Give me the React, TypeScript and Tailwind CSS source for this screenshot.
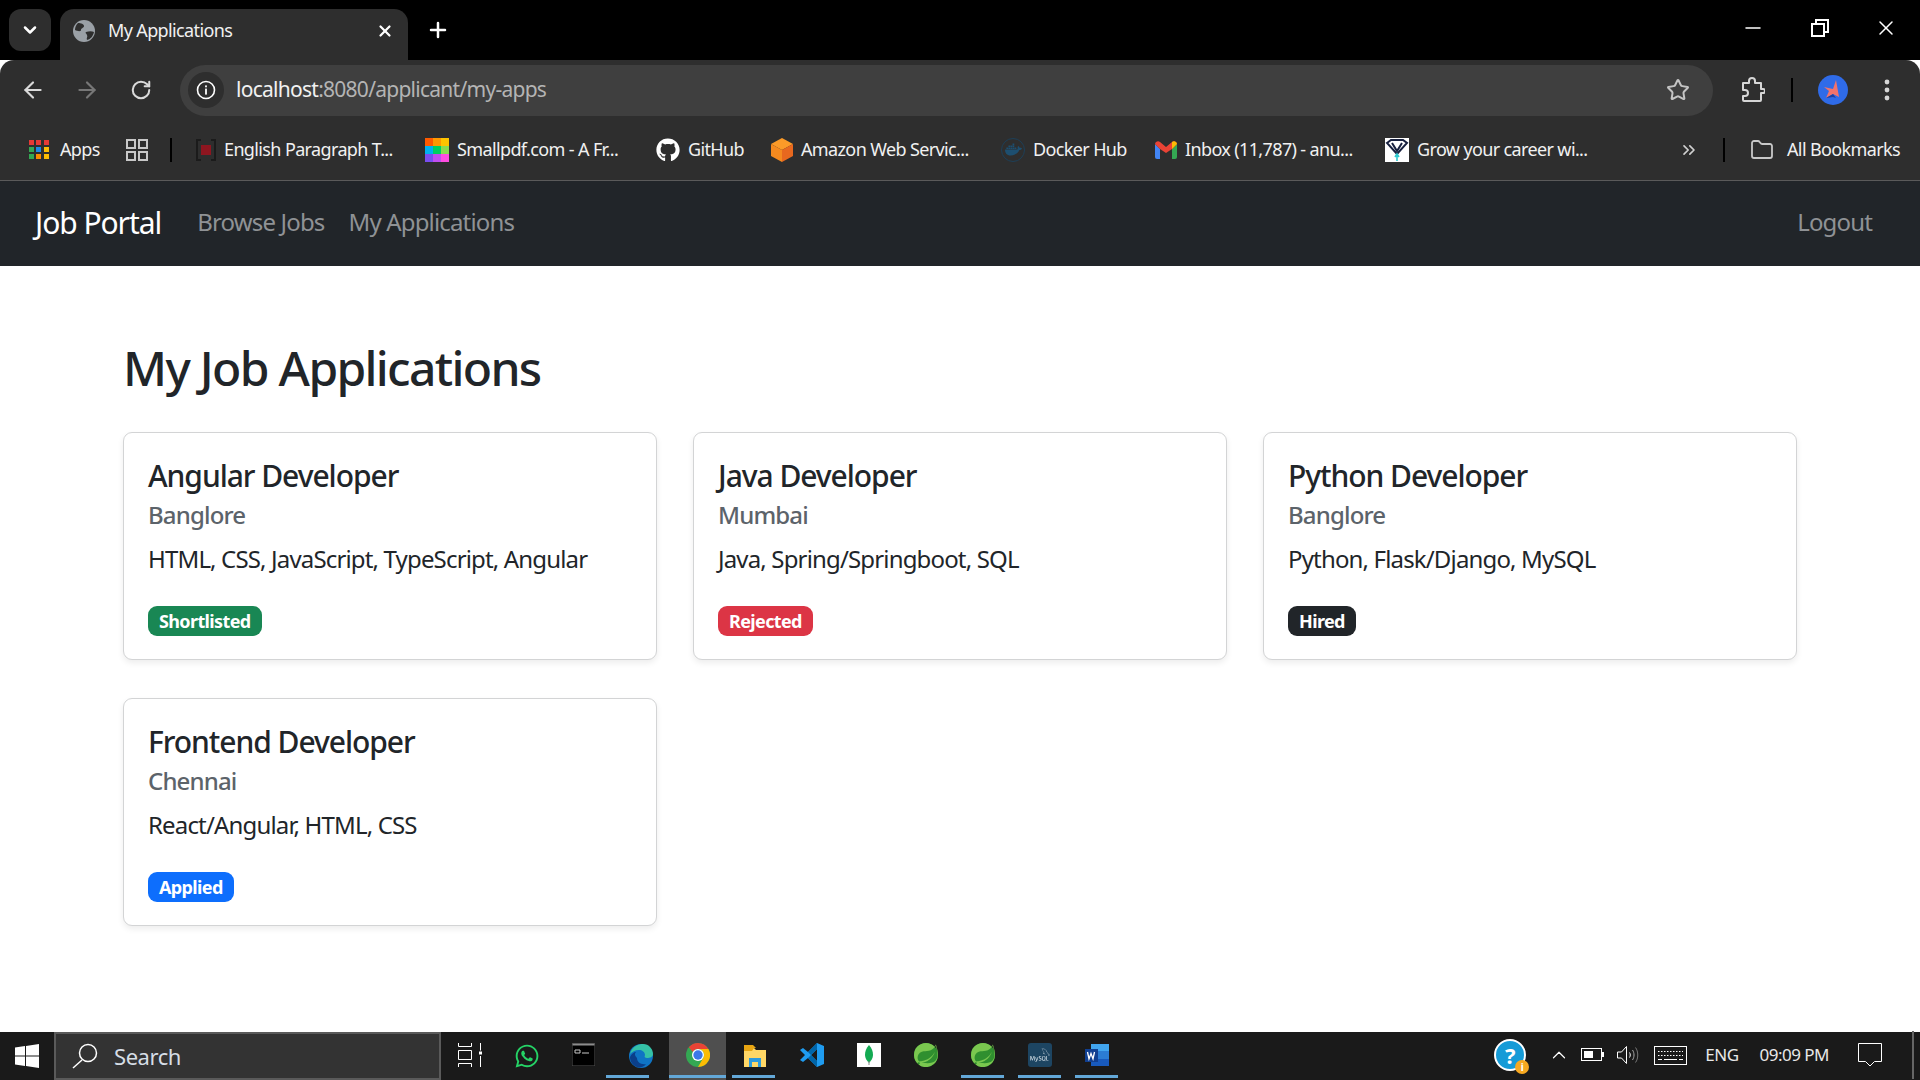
import { FC, ReactNode } from "react";
import {
  ArrowLeft,
  ArrowRight,
  ChevronDown,
  ChevronsRight,
  ChevronUp,
  Folder,
  Plus,
  RotateCw,
  Star,
  X,
  Minus,
} from "lucide-react";
import { FaGithub, FaWhatsapp, FaDocker } from "react-icons/fa";
import { SiSpring, SiMysql } from "react-icons/si";

const jobs = [
  { title: "Angular Developer", city: "Banglore", skills: "HTML, CSS, JavaScript, TypeScript, Angular", status: "Shortlisted", badge: "bg-[#198754]" },
  { title: "Java Developer", city: "Mumbai", skills: "Java, Spring/Springboot, SQL", status: "Rejected", badge: "bg-[#dc3545]" },
  { title: "Python Developer", city: "Banglore", skills: "Python, Flask/Django, MySQL", status: "Hired", badge: "bg-[#212529]" },
  { title: "Frontend Developer", city: "Chennai", skills: "React/Angular, HTML, CSS", status: "Applied", badge: "bg-[#0d6efd]" },
];

const Globe = () => (
  <svg width="22" height="22" viewBox="0 0 22 22">
    <circle cx="11" cy="11" r="11" fill="#9aa0a6" />
    <path d="M5 3c3 0 6 1 6 3s-3 2-3 4-4 1-6 0c0-3 1-5 3-7zM13 12c3-1 6-1 8 0-1 4-3 7-7 8-1-2 1-3 0-5s-2-2-1-3z" fill="#2e2e2e" />
  </svg>
);

const InfoIcon = () => (
  <svg width="20" height="20" viewBox="0 0 20 20" fill="none">
    <circle cx="10" cy="10" r="8.5" stroke="#fff" strokeWidth="1.6" />
    <rect x="9.1" y="8.6" width="1.8" height="6" fill="#fff" />
    <rect x="9.1" y="5.4" width="1.8" height="1.9" fill="#fff" />
  </svg>
);

const PuzzleIcon = () => (
  <svg width="24" height="26" viewBox="0 0 24 26" fill="none" stroke="#d6d6d6" strokeWidth="2" strokeLinejoin="round">
    <path d="M2 6h6V4a3 3 0 0 1 6 0v2h6v6h2a2 2 0 0 1 0 4h-2v7a1 1 0 0 1-1 1H3a1 1 0 0 1-1-1v-4h2a3 3 0 0 0 0-6H2z" />
  </svg>
);

const Profile = () => (
  <svg width="30" height="30" viewBox="0 0 30 30">
    <circle cx="15" cy="15" r="15" fill="#2f6be8" />
    <path d="M18 5l3 17-6-3-7 4 3-7-5-4 9 2z" fill="#f1736c" />
    <path d="M15 19l-7 4 7-1 3 1z" fill="#1d3f9e" />
  </svg>
);

const Dots = () => (
  <svg width="6" height="24" viewBox="0 0 6 24" fill="#d6d6d6">
    <circle cx="3" cy="4" r="2.4" />
    <circle cx="3" cy="12" r="2.4" />
    <circle cx="3" cy="20" r="2.4" />
  </svg>
);

const AppsGrid = () => {
  const colors = ["#e53935", "#e53935", "#e53935", "#34a853", "#1e88e5", "#fbbc05", "#34a853", "#fb8c00", "#fbbc05"];
  return (
    <div className="grid grid-cols-3 gap-[2px] w-[20px]">
      {colors.map((c, i) => (
        <svg key={i} width="5" height="5" viewBox="0 0 5 5">
          <rect width="5" height="5" fill={c} />
        </svg>
      ))}
    </div>
  );
};

const TabGroups = () => (
  <svg width="22" height="22" viewBox="0 0 22 22" fill="none" stroke="#c8c8c8" strokeWidth="2">
    <rect x="1" y="1" width="8" height="8" />
    <rect x="13" y="1" width="8" height="8" />
    <rect x="1" y="13" width="8" height="8" />
    <rect x="13" y="13" width="8" height="8" />
  </svg>
);

const EnglishIcon = () => (
  <svg width="20" height="24" viewBox="0 0 20 24" fill="none">
    <path d="M5 2H1v20h4M15 2h4v20h-4" stroke="#1b1b1b" strokeWidth="2" />
    <rect x="5" y="7" width="10" height="10" fill="#8e1620" />
  </svg>
);

const SmallpdfIcon = () => {
  const colors = ["#ff5a00", "#ff9800", "#ffc400", "#00b0f0", "#00d060", "#8bdc50", "#7a4df0", "#c04df0", "#ff4de0"];
  return (
    <div className="grid grid-cols-3 w-[24px] h-[24px]">
      {colors.map((c, i) => (
        <svg key={i} width="8" height="8" viewBox="0 0 8 8">
          <rect width="8" height="8" fill={c} />
        </svg>
      ))}
    </div>
  );
};

const AwsBox = () => (
  <svg width="22" height="24" viewBox="0 0 22 24">
    <path d="M11 0l11 6-11 6L0 6z" fill="#fb9a28" />
    <path d="M0 6l11 6v12L0 18z" fill="#f58a1f" />
    <path d="M22 6L11 12v12l11-6z" fill="#e8681f" />
  </svg>
);

const Gmail = () => (
  <svg width="22" height="18" viewBox="0 0 22 18">
    <path d="M0 3v13a2 2 0 0 0 2 2h3V8z" fill="#4285f4" />
    <path d="M22 3v13a2 2 0 0 1-2 2h-3V8z" fill="#34a853" />
    <path d="M0 3a3 3 0 0 1 5-2l6 5 6-5a3 3 0 0 1 5 2l-5 5-6 4-6-4z" fill="#ea4335" />
    <path d="M17 1a3 3 0 0 1 5 2l-5 5z" fill="#fbbc05" />
  </svg>
);

const GrowIcon = () => (
  <svg width="24" height="24" viewBox="0 0 24 24">
    <rect width="24" height="24" fill="#fff" />
    <path d="M2 5l4-3h12l4 3-10 11z" fill="none" stroke="#17203f" strokeWidth="2" />
    <path d="M7 5l5 8 5-8" fill="none" stroke="#17203f" strokeWidth="2" />
    <path d="M12 23v-6M10 19l2-3 2 3" fill="none" stroke="#2cc8cf" strokeWidth="1.6" />
  </svg>
);

const Bookmark: FC<{ className: string; icon: ReactNode; label: string }> = ({ className, icon, label }) => (
  <div className={`flex items-center shrink-0 ${className}`}>
    {icon}
    <span className="ml-[8px] text-[18px] tracking-[-0.035em] text-[#f1f1f1] whitespace-nowrap">{label}</span>
  </div>
);

const WinLogo = () => (
  <svg width="24" height="24" viewBox="0 0 24 24" fill="#fff">
    <path d="M0 3.5l10-1.4v9.4H0zM11 2l13-2v11.5H11zM0 12.5h10v9.4L0 20.500zM11 12.500h13V24l-13-2z" />
  </svg>
);

const TaskView = () => (
  <svg width="24" height="24" viewBox="0 0 24 24" fill="none" stroke="#fff" strokeWidth="1">
    <path d="M0.500 3.500h13M0.500 0v3.500M13.500 0v3.500M0.500 7.500h13v9h-13zM0.500 20.500h13M0.500 24v-3.500M13.500 24v-3.500M22.500 0v7.500M22.500 13v11" />
    <rect x="21" y="8.500" width="3" height="3" fill="#fff" stroke="none" />
  </svg>
);

const Terminal = () => (
  <svg width="23" height="23" viewBox="0 0 23 23">
    <rect width="23" height="23" fill="#000" stroke="#555" />
    <rect x="0.500" y="0.500" width="22" height="2" fill="#8c8c8c" />
    <path d="M3 7h5v3H3zM10 10h7" fill="none" stroke="#c8c8c8" strokeWidth="1" />
  </svg>
);

const Edge = () => (
  <svg width="24" height="26" viewBox="0 0 24 26">
    <circle cx="12" cy="13" r="12" fill="#0f74c4" />
    <path d="M1 11C3 3 10 1 14 1c6 0 10 5 10 10 0 3-3 4-6 4-2 0-3-1-2-3 0-3-3-5-6-5-4 0-7 2-9 4z" fill="#35c1a6" />
    <path d="M8 15c0 4 4 7 9 6-2 3-6 4-9 3-5-2-7-6-7-10 1-3 4-5 6-5-2 2-1 4 1 6z" fill="#0b3f8a" />
  </svg>
);

const Chrome = () => (
  <svg width="24" height="24" viewBox="0 0 24 24">
    <circle cx="12" cy="12" r="12" fill="#34a853" />
    <path d="M12 0a12 12 0 0 1 10.400 6H12a6 6 0 0 0-5.200 3L2.800 4.300A12 12 0 0 1 12 0z" fill="#ea4335" />
    <path d="M22.400 6A12 12 0 0 1 12 24l5.200-9A6 6 0 0 0 17.200 9 6 6 0 0 0 12 6z" fill="#fbbc05" />
    <circle cx="12" cy="12" r="6" fill="#fff" />
    <circle cx="12" cy="12" r="4.700" fill="#3b78e7" />
  </svg>
);

const Explorer = () => (
  <svg width="22" height="24" viewBox="0 0 22 24">
    <path d="M0 2h9l3 3H0z" fill="#e8a512" />
    <path d="M0 5h10l2 2h10v17H0z" fill="#ffd766" />
    <path d="M0 5h10l-2 3H0z" fill="#e8a512" />
    <path d="M5 24v-9h12v9h-3v-5H8v5z" fill="#2e9bdc" />
  </svg>
);

const VsCode = () => (
  <svg width="24" height="24" viewBox="0 0 24 24">
    <path d="M17 0l7 3v18l-7 3-9-9-5 4-3-2 5-5-5-5 3-2 5 4zM17 6l-6 6 6 6z" fill="#1f9cf0" />
    <path d="M17 0v6l-6 6-3-3zM8 15l3-3 6 6v6z" fill="#0065a9" />
  </svg>
);

const Mongo = () => (
  <svg width="24" height="24" viewBox="0 0 24 24">
    <rect width="24" height="24" fill="#fff" />
    <path d="M12 2c-3 3-4 7-4 10s2 6 4 8c2-2 4-5 4-8s-1-7-4-10z" fill="#13aa52" />
    <rect x="11.500" y="18" width="1" height="4" fill="#888" />
  </svg>
);

const Spring = () => (
  <div className="w-[24px] h-[24px] rounded-full bg-[#2f8f2f] flex items-center justify-center">
    <SiSpring size={24} color="#7ac74f" />
  </div>
);

const MySql = () => (
  <div className="w-[24px] h-[24px] rounded-[3px] bg-[#1d4562] flex items-center justify-center">
    <SiMysql size={20} color="#c9d6df" />
  </div>
);

const Word = () => (
  <svg width="24" height="24" viewBox="0 0 24 24">
    <rect x="6" y="1" width="18" height="7" fill="#41a5ee" />
    <rect x="6" y="8" width="18" height="8" fill="#2b7cd3" />
    <rect x="6" y="16" width="18" height="7" fill="#185abd" />
    <rect x="0" y="6" width="13" height="13" fill="#103f91" />
    <path d="M2.500 9l1.500 7 2-5.500L8 16l1.500-7" fill="none" stroke="#fff" strokeWidth="1.300" />
  </svg>
);

const HelpTray = () => (
  <div className="relative w-[32px] h-[32px] rounded-full bg-[#159bd7] border-[2px] border-white flex items-center justify-center">
    <span className="text-white text-[22px] font-bold leading-none">?</span>
    <span className="absolute right-[-5px] bottom-[-5px] w-[14px] h-[14px] rounded-full bg-[#f6a821] text-white text-[10px] font-bold leading-[14px] text-center">i</span>
  </div>
);

const Battery = () => (
  <svg width="23" height="14" viewBox="0 0 23 14" fill="none">
    <rect x="0.500" y="0.500" width="20" height="12" stroke="#fff" />
    <rect x="3" y="3" width="9" height="7" fill="#fff" />
    <rect x="21" y="4" width="2" height="5" fill="#fff" />
  </svg>
);

const Speaker = () => (
  <svg width="23" height="18" viewBox="0 0 23 18" fill="none" stroke="#fff" strokeWidth="1">
    <path d="M0.500 6h4l5-5.500v17l-5-5.500h-4z" />
    <path d="M12.500 6.500c1 1.500 1 3.500 0 5" />
    <path d="M15.500 4c2 3 2 7 0 10" stroke="#aaa" />
    <path d="M18.500 1.500c3 4 3 11 0 15" stroke="#777" />
  </svg>
);

const Keyboard = () => (
  <svg width="33" height="19" viewBox="0 0 33 19" fill="none" stroke="#fff">
    <rect x="0.500" y="0.500" width="32" height="18" />
    <path d="M4 5.500h25M4 9.500h25" strokeDasharray="1.500 1.500" />
    <path d="M4 13.500h4M10 13.500h13M25 13.500h4" />
  </svg>
);

const Notify = () => (
  <svg width="24" height="24" viewBox="0 0 24 24" fill="none" stroke="#fff" strokeWidth="1">
    <path d="M0.500 0.500h23v18h-7l-4.500 4.500-4.500-4.500h-7z" />
  </svg>
);

const TaskIcon: FC<{ children: ReactNode; underline?: string; active?: boolean }> = ({ children, underline, active }) => (
  <div className={`relative w-[57px] h-[48px] flex items-start pt-[11px] justify-center shrink-0 ${active ? "bg-[#4f4f4f]" : ""}`}>
    {children}
    {underline ? <div className={`absolute bottom-[2px] h-[3px] bg-[#63a8d8] ${underline}`}></div> : <></>}
  </div>
);

const JobCard: FC<{ job: (typeof jobs)[number] }> = ({ job }) => (
  <div className="h-[228px] bg-white border border-[#d3d4d5] rounded-[9px] shadow-[0_3px_6px_rgba(0,0,0,0.075)] px-[24px] pt-[25px]">
    <h5 className="text-[30px] leading-[36px] font-medium tracking-[-0.035em] text-[#212529]">{job.title}</h5>
    <h6 className="mt-[6px] text-[24px] leading-[29px] font-medium tracking-[-0.035em] text-[#5c636a]">{job.city}</h6>
    <p className="mt-[12px] text-[24px] leading-[36px] tracking-[-0.035em] text-[#212529]">{job.skills}</p>
    <span className={`mt-[29px] block w-fit h-[30px] px-[11px] rounded-[9px] text-[18px] leading-[30px] font-bold tracking-[-0.035em] text-white ${job.badge}`}>
      {job.status}
    </span>
  </div>
);

const App: FC = () => {
  return (
    <div className="h-screen w-full flex flex-col overflow-hidden bg-white font-['Noto_Sans',sans-serif]">
      {/* tab strip */}
      <div className="h-[60px] bg-black flex items-start shrink-0 relative">
        <div className="ml-[9px] mt-[9px] w-[42px] h-[42px] rounded-[12px] bg-[#2e2e2e] flex items-center justify-center">
          <ChevronDown size={20} color="#fff" strokeWidth={3} />
        </div>
        <div className="ml-[9px] mt-[9px] w-[348px] h-[51px] bg-[#2e2e2e] rounded-t-[14px] flex items-center pl-[13px] pb-[8px]">
          <Globe />
          <span className="ml-[13px] text-[18px] tracking-[-0.035em] text-[#f1f1f1]">My Applications</span>
          <div className="ml-auto mr-[14px]">
            <X size={18} color="#fff" strokeWidth={3} />
          </div>
        </div>
        <div className="ml-[18px] mt-[18px]">
          <Plus size={24} color="#fff" strokeWidth={2.5} />
        </div>
        <div className="ml-auto flex items-center mt-[16px] text-white">
          <Minus size={24} color="#fff" strokeWidth={1.500} />
          <svg className="ml-[46px]" width="18" height="18" viewBox="0 0 18 18" fill="none" stroke="#fff" strokeWidth="2">
            <rect x="1" y="5" width="12" height="12" />
            <path d="M5 5V1h12v12h-4" />
          </svg>
          <div className="ml-[45px] mr-[22px]">
            <X size={24} color="#fff" strokeWidth={1.500} />
          </div>
        </div>
      </div>

      {/* toolbar */}
      <div className="h-[60px] bg-[#2e2e2e] rounded-t-[14px] mt-[-0px] flex items-center shrink-0">
        <div className="w-[60px] flex justify-center ml-[3px]">
          <ArrowLeft size={26} color="#dadada" strokeWidth={2} />
        </div>
        <div className="w-[48px] flex justify-center">
          <ArrowRight size={26} color="#777" strokeWidth={2} />
        </div>
        <div className="w-[60px] flex justify-center">
          <RotateCw size={22} color="#dadada" strokeWidth={2.2} />
        </div>
        <div className="ml-[9px] w-[1533px] h-[51px] bg-[#3f3f3f] rounded-full flex items-center pl-[8px] shrink-0">
          <div className="w-[36px] h-[36px] rounded-full bg-[#2e2e2e] flex items-center justify-center">
            <InfoIcon />
          </div>
          <span className="ml-[12px] text-[21px] tracking-[-0.035em] text-[#f1f1f1]">localhost<span className="text-[#b4b4b4]">:8080/applicant/my-apps</span></span>
          <div className="ml-auto mr-[23px]">
            <Star size={24} color="#c4c4c4" strokeWidth={2} />
          </div>
        </div>
        <div className="ml-[28px]">
          <PuzzleIcon />
        </div>
        <div className="ml-[26px] w-[2px] h-[24px] bg-black"></div>
        <div className="ml-[25px]">
          <Profile />
        </div>
        <div className="ml-[36px]">
          <Dots />
        </div>
      </div>

      {/* bookmarks */}
      <div className="h-[61px] bg-[#2e2e2e] border-b border-[#5a5a5a] flex items-center shrink-0 pb-[1px] pl-[29px]">
        <Bookmark className="w-[97px] gap-[3px]" icon={<AppsGrid />} label="Apps" />
        <TabGroups />
        <div className="ml-[22px] mr-[24px] w-[2px] h-[24px] bg-black"></div>
        <Bookmark className="w-[229px]" icon={<EnglishIcon />} label="English Paragraph T..." />
        <Bookmark className="w-[231px]" icon={<SmallpdfIcon />} label="Smallpdf.com - A Fr..." />
        <Bookmark className="w-[115px]" icon={<FaGithub size={24} color="#fff" />} label="GitHub" />
        <Bookmark className="w-[230px]" icon={<AwsBox />} label="Amazon Web Servic..." />
        <Bookmark className="w-[154px]" icon={<div className="w-[24px] h-[24px] rounded-full border border-[#1d3f57] flex items-center justify-center"><FaDocker size={17} color="#1d4f70" /></div>} label="Docker Hub" />
        <Bookmark className="w-[230px]" icon={<Gmail />} label="Inbox (11,787) - anu..." />
        <Bookmark className="w-[294px]" icon={<GrowIcon />} label="Grow your career wi..." />
        <ChevronsRight size={20} color="#d0d0d0" strokeWidth={2} />
        <div className="ml-[24px] mr-[25px] w-[2px] h-[24px] bg-black"></div>
        <Folder size={24} color="#c8c8c8" strokeWidth={1.800} />
        <span className="ml-[13px] text-[18px] tracking-[-0.035em] text-[#f1f1f1] whitespace-nowrap">All Bookmarks</span>
      </div>

      {/* navbar */}
      <nav className="h-[85px] bg-[#212529] flex items-center shrink-0 pl-[35px] pr-[48px] pb-[3px]">
        <span className="text-[30px] tracking-[-0.035em] text-white">Job Portal</span>
        <span className="ml-[36px] text-[24px] tracking-[-0.035em] text-[#8f9295]">Browse Jobs</span>
        <span className="ml-[24px] text-[24px] tracking-[-0.035em] text-[#8f9295]">My Applications</span>
        <span className="ml-auto text-[24px] tracking-[-0.035em] text-[#8f9295]">Logout</span>
      </nav>

      {/* page */}
      <main className="flex-1 min-h-0">
        <div className="w-[1710px] mx-auto px-[18px] pt-[73px]">
          <h2 className="text-[48px] leading-[58px] font-medium tracking-[-0.035em] text-[#212529] mb-[35px]">My Job Applications</h2>
          <div className="grid grid-cols-3 gap-x-[36px] gap-y-[38px]">
            {jobs.map((job) => (
              <JobCard key={job.title} job={job} />
            ))}
          </div>
        </div>
      </main>

      {/* taskbar */}
      <div className="h-[48px] bg-[#1a1a1a] flex items-start shrink-0 relative">
        <div className="w-[54px] h-[48px] flex items-center justify-center">
          <WinLogo />
        </div>
        <div className="w-[387px] h-[48px] bg-[#333] border-[2px] border-b-[2px] border-[#5a5a5a] flex items-center pl-[16px]">
          <svg width="26" height="26" viewBox="0 0 26 26" fill="none" stroke="#fff" strokeWidth="1.500">
            <circle cx="16" cy="10" r="8.500" />
            <path d="M10 17L1 25" />
          </svg>
          <span className="ml-[16px] text-[22px] tracking-[-0.02em] text-[#d6dee6]">Search</span>
        </div>
        <TaskIcon><TaskView /></TaskIcon>
        <TaskIcon><FaWhatsapp size={26} color="#25d366" /></TaskIcon>
        <TaskIcon><Terminal /></TaskIcon>
        <TaskIcon underline="left-[-6px] w-[43px]"><Edge /></TaskIcon>
        <TaskIcon active underline="left-0 w-full"><Chrome /></TaskIcon>
        <TaskIcon underline="left-[6px] w-[43px]"><Explorer /></TaskIcon>
        <TaskIcon><VsCode /></TaskIcon>
        <TaskIcon><Mongo /></TaskIcon>
        <TaskIcon><Spring /></TaskIcon>
        <TaskIcon underline="left-[7px] w-[43px]"><Spring /></TaskIcon>
        <TaskIcon underline="left-[7px] w-[43px]"><MySql /></TaskIcon>
        <TaskIcon underline="left-[7px] w-[43px]"><Word /></TaskIcon>
        <div className="ml-auto h-[48px] flex items-center text-white mr-[6px] pb-[2px]">
          <HelpTray />
          <div className="ml-[22px]"><ChevronUp size={22} color="#fff" strokeWidth={1.300} /></div>
          <div className="ml-[11px]"><Battery /></div>
          <div className="ml-[13px]"><Speaker /></div>
          <div className="ml-[14px]"><Keyboard /></div>
          <span className="ml-[18px] text-[17px] tracking-[-0.03em] text-[#e8e8e8]">ENG</span>
          <span className="ml-[21px] text-[17px] tracking-[-0.03em] text-[#e8e8e8] whitespace-nowrap">09:09 PM</span>
          <div className="ml-[29px]"><Notify /></div>
          <div className="ml-[30px] w-[2px] h-[48px] bg-[#666]"></div>
        </div>
      </div>
    </div>
  );
};

export default App;
